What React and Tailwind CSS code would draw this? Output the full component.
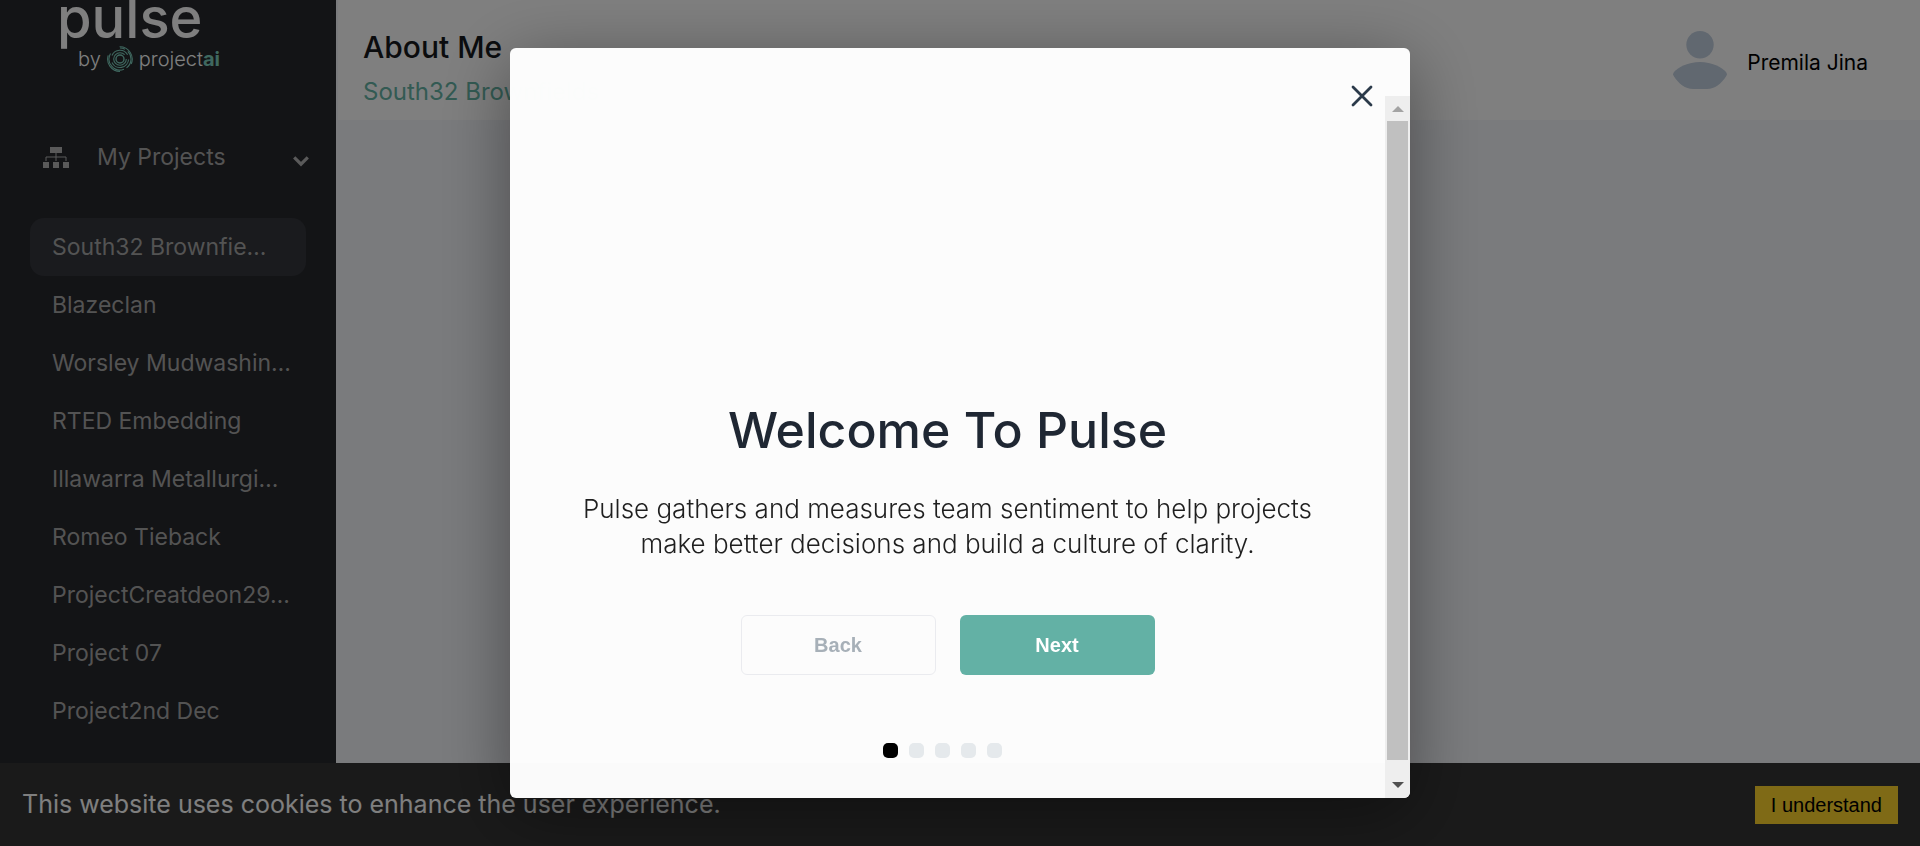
import React from "react";

const projects = [
  "South32 Brownfie…",
  "Blazeclan",
  "Worsley Mudwashin…",
  "RTED Embedding",
  "Illawarra Metallurgi…",
  "Romeo Tieback",
  "ProjectCreatdeon29…",
  "Project 07",
  "Project2nd Dec",
];

const steps = [1, 2, 3, 4, 5];

function RingsIcon() {
  return (
    <svg viewBox="0 0 26 26" className="size-[26px]" fill="none" stroke="#7ed0bf" strokeWidth="1.1" aria-hidden="true">
      <circle cx="13" cy="13" r="4" strokeWidth="1.4" />
      <circle cx="13" cy="13" r="6.3" strokeDasharray="34 5.6" />
      <path d="M5 9.5A8.7 8.7 0 0 1 20.6 8.8M21.6 13.5A8.7 8.7 0 0 1 5 16.4" />
      <path d="M13 2A11 11 0 0 1 18 3.3M20.8 5.3A11 11 0 0 1 19.5 21.9M17 23.2A11 11 0 0 1 3.5 7.5" />
      <path d="M12.6 0.7A12.4 12.4 0 0 1 24.2 18M13 25.4A12.4 12.4 0 0 1 1.2 9.3" />
    </svg>
  );
}

function SitemapIcon() {
  return (
    <svg viewBox="0 0 26 21" className="h-[21px] w-[26px] shrink-0" aria-hidden="true">
      <path d="M7 0h12v6H7zM0 15h6v6H0zM10 15h6v6h-6zM20 15h6v6h-6z" fill="#b4b4b4" />
      <path d="M13 6v8M3 14v-4h20v4" fill="none" stroke="#b4b4b4" strokeWidth="1" />
    </svg>
  );
}

function Sidebar() {
  return (
    <aside className="w-[336px] shrink-0 bg-[#26282c]">
      <div className="h-20 overflow-hidden pl-[57px]">
        <div className="-mt-[10px] text-[56px] leading-[56px] font-medium text-white">pulse</div>
        <div className="flex items-center gap-[6px] pl-[21px] text-[20px] leading-6 font-light text-white">
          <span>by</span>
          <RingsIcon />
          <span>
            project<span className="font-bold text-[#7ed0bf]">ai</span>
          </span>
        </div>
      </div>
      <nav className="px-[30px] pt-14" aria-label="Projects">
        <button type="button" className="flex w-full items-center pl-[13px] text-[23px] leading-[42px] text-[#a6a6a6]">
          <SitemapIcon />
          <span className="ml-7 flex-1 text-left">My Projects</span>
          <svg viewBox="0 0 16 11" className="mt-2 -mr-[3px] h-[11px] w-4" fill="none" stroke="#b4b4b4" strokeWidth="3.2" aria-hidden="true">
            <path d="M1.2 1.4L8 8.2l6.8-6.8" />
          </svg>
        </button>
        <ul className="mt-10">
          {projects.map((name, i) => (
            <li key={name}>
              <a
                href="#"
                className={
                  "block rounded-[14px] px-[22px] text-[23px] leading-[58px] whitespace-nowrap text-[#a6a6a6] " +
                  (i === 0 ? "bg-[#34363c]" : "")
                }
              >
                {name}
              </a>
            </li>
          ))}
        </ul>
      </nav>
    </aside>
  );
}

function Header() {
  return (
    <header className="ml-0.5 flex h-[120px] items-center justify-between bg-white pr-[52px] pl-[25px]">
      <div className="pt-[14px]">
        <h1 className="text-[30px] leading-[50px] font-medium text-[#16191d]">About Me</h1>
        <p className="text-[24px] leading-10 text-[#66b5a6]">South32 Brownfields</p>
      </div>
      <div className="flex items-center gap-5">
        <svg viewBox="0 0 54 58" className="h-[58px] w-[54px]" fill="#c3d0e0" aria-hidden="true">
          <circle cx="27" cy="13.7" r="13.7" />
          <path d="M27 31C39 31 49 36.500 53 41C54.200 43 54.200 43.500 53 45.500C48 53 42 58 34 58H20C12 58 6 53 1 45.500C-.2 43.500-.2 43 1 41C5 36.500 15 31 27 31Z" />
        </svg>
        <span className="pt-1.5 text-[21px] text-black">Premila Jina</span>
      </div>
    </header>
  );
}

function CookieBar() {
  return (
    <div className="fixed inset-x-0 bottom-0 flex h-[83px] items-center justify-between bg-[#353535] px-[22px]">
      <p className="text-[25px] text-white">This website uses cookies to enhance the user experience.</p>
      <button type="button" className="h-[38px] bg-[#ffd42d] px-4 font-['Liberation_Sans',sans-serif] text-[20px] text-black">
        I understand
      </button>
    </div>
  );
}

function ScrollTrack() {
  return (
    <div className="flex w-[25px] shrink-0 flex-col items-center bg-[#eeeeee]" aria-hidden="true">
      <div className="flex h-[25px] items-center">
        <svg viewBox="0 0 12 6" className="h-1.5 w-3" fill="#a3a3a3">
          <path d="M6 0l6 6H0z" />
        </svg>
      </div>
      <div className="w-[21px] flex-1 bg-[#c0c0c0]" />
      <div className="flex h-[38px] items-end pb-[10px]">
        <svg viewBox="0 0 12 6" className="h-1.5 w-3" fill="#505050">
          <path d="M6 6l6-6H0z" />
        </svg>
      </div>
    </div>
  );
}

function WelcomeDialog() {
  return (
    <div className="fixed inset-0 flex items-center justify-center bg-black/50">
      <div
        role="dialog"
        aria-modal="true"
        aria-labelledby="welcome-title"
        className="relative flex h-[750px] max-h-full w-[900px] max-w-full flex-col overflow-hidden rounded-md bg-white/98 pt-12 shadow-[0_15px_70px_rgba(0,0,0,0.4)]"
      >
        <button type="button" aria-label="Close" className="absolute top-[37px] right-[37px]">
          <svg viewBox="0 0 22 22" className="size-[22px]" fill="none" stroke="#2b3a4a" strokeWidth="2.8" strokeLinecap="round" aria-hidden="true">
            <path d="M2 2l18 18M20 2L2 20" />
          </svg>
        </button>
        <div className="flex min-h-0 flex-1">
          <div className="flex flex-1 flex-col items-center justify-end pb-10">
            <h2 id="welcome-title" className="text-[50px] leading-[60px] font-medium text-[#1f2733]">
              Welcome To Pulse
            </h2>
            <p className="mt-[31px] max-w-[780px] text-center text-[26px] leading-[35px] font-light text-[#1f1f1f]">
              Pulse gathers and measures team sentiment to help projects
              <br />
              make better decisions and build a culture of clarity.
            </p>
            <div className="mt-[54px] flex gap-6 font-['Liberation_Sans',sans-serif] text-[20px] font-bold">
              <button type="button" className="h-[60px] w-[195px] rounded-md border border-[#eaebef] text-[#a7b0b8]">
                Back
              </button>
              <button type="button" className="h-[60px] w-[195px] rounded-md bg-[#63b1a5] text-white">
                Next
              </button>
            </div>
            <div className="mt-[68px] flex">
              {steps.map((n) => (
                <span key={n} className={"mr-[11px] size-[15px] rounded-[5px] " + (n === 1 ? "bg-black" : "bg-[#e5e9ec]")} />
              ))}
            </div>
          </div>
          <ScrollTrack />
        </div>
      </div>
    </div>
  );
}

export default function App() {
  return (
    <div className="flex h-screen overflow-hidden bg-[#f4f6fa] font-['Inter',sans-serif]">
      <Sidebar />
      <main className="min-w-0 flex-1">
        <Header />
      </main>
      <CookieBar />
      <WelcomeDialog />
    </div>
  );
}
